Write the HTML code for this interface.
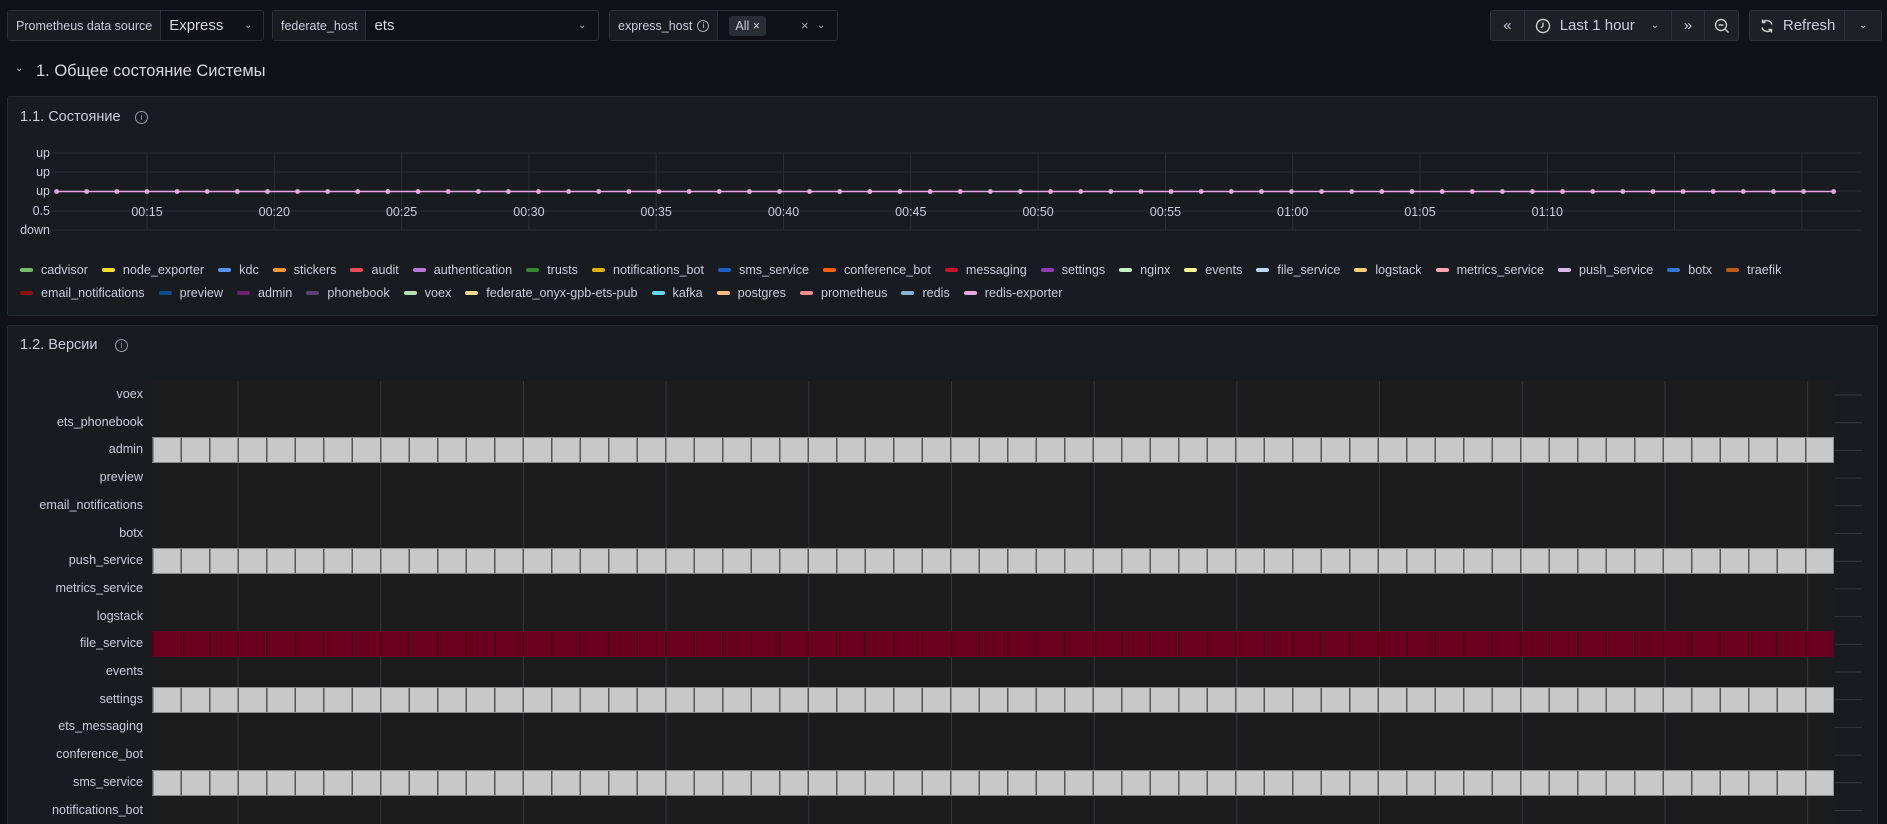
<!DOCTYPE html>
<html style="overflow:hidden;height:824px"><head><meta charset="utf-8">
<style>
*{box-sizing:border-box;margin:0;padding:0}
html,body{overflow:hidden}
body{width:1887px;height:824px;overflow:hidden;background:#111217;font-family:"Liberation Sans",sans-serif;color:#ccccdc;position:relative}
.abs{position:absolute}
.box{position:absolute;top:10px;height:31px;border:1px solid #2c3038;border-radius:3px;background:#111217;display:flex;align-items:center;font-size:13px}
.lab{height:100%;display:flex;align-items:center;padding:0 8px;background:#181b1f;border-right:1px solid #2c3038;color:#ccccdc;font-size:12.5px}
.val{padding:0 8px;font-size:15px;color:#d8d9e0}
.chev{position:absolute;font-size:10px;color:#aaa}
.panel{position:absolute;left:7px;right:9px;background:#181b1f;border:1px solid #25282e;border-radius:3px}
.ptitle{position:absolute;left:12px;font-size:14.5px;color:#ccccdc}
.info{display:inline-block;width:13px;height:13px;border:1.3px solid #9a9aa6;border-radius:50%;position:absolute;font-size:9px;text-align:center;line-height:10px;color:#9a9aa6}
.legend{position:absolute;left:12px;display:flex;font-size:12.6px;color:#ccccdc;white-space:nowrap}
.legend span{display:flex;align-items:center;margin-right:14px}
.legend i{display:inline-block;width:13px;height:4px;border-radius:2px;margin-right:8px}
.rl{position:absolute;right:1744px;font-size:12.6px;color:#ccccdc;text-align:right;white-space:nowrap}
.bar{position:absolute;left:152px;width:1682px;height:26px;border-top:1px solid #8a8a8a;border-bottom:1px solid #8a8a8a}
.tb{position:absolute;top:10px;height:31px;border:1px solid #2c3038;border-radius:3px;background:#1d2025;display:flex;align-items:center;color:#ccccdc;font-size:15px}
.tb div{height:100%;display:flex;align-items:center;justify-content:center;border-right:1px solid #2c3038}
.tb div:last-child{border-right:none}
</style></head><body>

<div class="box" style="left:7px;width:257px"><div class="lab">Prometheus data source</div><div class="val">Express</div><span class="chev" style="left:236px">&#8964;</span></div>
<div class="box" style="left:272px;width:327px"><div class="lab">federate_host</div><div class="val">ets</div><span class="chev" style="left:305px">&#8964;</span></div>
<div class="box" style="left:609px;width:229px"><div class="lab">express_host <span style="display:inline-block;width:12px;height:12px;border:1.2px solid #aaa;border-radius:50%;margin-left:5px;font-size:8px;text-align:center;line-height:9px">i</span></div>
<span style="margin-left:11px;background:#2a2d33;border-radius:3px;padding:3px 6px;font-size:12.5px">All &#215;</span><span style="position:absolute;left:191px;font-size:13px;color:#aaa">&#215;</span><span class="chev" style="left:207px">&#8964;</span></div>

<div class="tb" style="left:1490px;width:249px">
<div style="width:34px;font-size:15px">&#171;</div>
<div style="width:148px;justify-content:flex-start;padding-left:10px"><svg width="16" height="16" viewBox="0 0 16 16"><circle cx="8" cy="8" r="6.5" fill="none" stroke="#ccc" stroke-width="1.4"/><path d="M8 4.5V8l-2 2" fill="none" stroke="#ccc" stroke-width="1.4"/></svg><span style="margin-left:9px">Last 1 hour</span><span style="margin-left:16px;font-size:10px">&#8964;</span></div>
<div style="width:34px;font-size:15px">&#187;</div>
<div style="width:33px"><svg width="16" height="16" viewBox="0 0 16 16"><circle cx="7" cy="7" r="5.5" fill="none" stroke="#ccc" stroke-width="1.4"/><path d="M4.5 7h5M11 11l3.5 3.5" stroke="#ccc" stroke-width="1.4"/></svg></div>
</div>
<div class="tb" style="left:1749px;width:133px">
<div style="width:96px"><svg width="16" height="16" viewBox="0 0 16 16"><path d="M13 6.5A5.5 5.5 0 0 0 3.5 4.5M3 9.5a5.5 5.5 0 0 0 9.5 2M3.5 1.5v3h3M12.5 14.5v-3h-3" fill="none" stroke="#ccc" stroke-width="1.4"/></svg><span style="margin-left:8px">Refresh</span></div>
<div style="width:36px;font-size:10px">&#8964;</div>
</div>

<div class="abs" style="left:15px;top:63px;font-size:10px;color:#ccc">&#8964;</div>
<div class="abs" style="left:36px;top:62px;font-size:16.5px;color:#d8d9e0">1. Общее состояние Системы</div>

<div class="panel" style="top:96px;height:220px">
<div class="ptitle" style="top:12px">1.1. Состояние</div>
<span class="info" style="left:127px;top:14px">i</span>
<div class="legend" style="top:166px">
<span><i style="background:#73bf69"></i>cadvisor</span><span><i style="background:#fade2a"></i>node_exporter</span><span><i style="background:#5794f2"></i>kdc</span><span><i style="background:#ff9830"></i>stickers</span><span><i style="background:#f2495c"></i>audit</span><span><i style="background:#b877d9"></i>authentication</span><span><i style="background:#37872d"></i>trusts</span><span><i style="background:#e0b400"></i>notifications_bot</span><span><i style="background:#1f60c4"></i>sms_service</span><span><i style="background:#fa6400"></i>conference_bot</span><span><i style="background:#c4162a"></i>messaging</span><span><i style="background:#8f3bb8"></i>settings</span><span><i style="background:#c8f2c2"></i>nginx</span><span><i style="background:#fff899"></i>events</span><span><i style="background:#c0d8ff"></i>file_service</span><span><i style="background:#ffcb7d"></i>logstack</span><span><i style="background:#ffa6b0"></i>metrics_service</span><span><i style="background:#deb6f2"></i>push_service</span><span><i style="background:#3274d9"></i>botx</span><span><i style="background:#c15c17"></i>traefik</span>
</div>
<div class="legend" style="top:189px">
<span><i style="background:#8a0f10"></i>email_notifications</span><span><i style="background:#0b4b8a"></i>preview</span><span><i style="background:#6e2068"></i>admin</span><span><i style="background:#584477"></i>phonebook</span><span><i style="background:#b8deb0"></i>voex</span><span><i style="background:#f6d891"></i>federate_onyx-gpb-ets-pub</span><span><i style="background:#5fd9e8"></i>kafka</span><span><i style="background:#ffb87d"></i>postgres</span><span><i style="background:#f08c8c"></i>prometheus</span><span><i style="background:#82b5d8"></i>redis</span><span><i style="background:#e5a8e2"></i>redis-exporter</span>
</div>
</div>
<svg id="c1" class="abs" style="left:0;top:0" width="1887" height="320"></svg>

<div class="panel" style="top:325px;height:499px;border-bottom:none;border-radius:3px 3px 0 0">
<div class="ptitle" style="top:11px">1.2. Версии</div>
<span class="info" style="left:107px;top:13px">i</span>
</div>
<div class="abs" style="left:152px;top:381px;width:1682px;height:443px;background:#1c1c1d"></div>
<svg id="c2" class="abs" style="left:0;top:0" width="1887" height="824"></svg>
<div id="rows" class="abs" style="left:0;top:0;width:1887px;height:824px;overflow:hidden"></div>

<script>
var s1=document.getElementById('c1'),h='';
[153,172,191,211,230].forEach(function(y){h+='<line x1="52" x2="1862" y1="'+y+'" y2="'+y+'" stroke="#2a2d33"/>';});
var yl=['up','up','up','0.5','down'];[153,172,191,211,230].forEach(function(y,i){h+='<text x="50" y="'+(y+4)+'" text-anchor="end" font-size="12.5" fill="#ccccdc" font-family="Liberation Sans">'+yl[i]+'</text>';});
var xl=['00:15','00:20','00:25','00:30','00:35','00:40','00:45','00:50','00:55','01:00','01:05','01:10'];
for(var k=0;k<14;k++){var x=147+127.3*k;if(x>1860)break;h+='<line x1="'+x+'" x2="'+x+'" y1="153" y2="230" stroke="#2a2d33"/>';if(xl[k])h+='<text x="'+x+'" y="216" text-anchor="middle" font-size="12.5" fill="#ccccdc" font-family="Liberation Sans">'+xl[k]+'</text>';}
h+='<line x1="56" x2="1834" y1="191.5" y2="191.5" stroke="#e5a8e2" stroke-width="1.5"/>';
for(var k=0;k<60;k++){h+='<circle cx="'+(56.6+30.12*k)+'" cy="191.5" r="2.4" fill="#e5a8e2"/>';}
s1.innerHTML=h;
var s2=document.getElementById('c2'),g='';
for(var k=0;k<12;k++){var x=238+142.7*k;g+='<line x1="'+x+'" x2="'+x+'" y1="381" y2="824" stroke="#33363c"/>';}
var names=['voex','ets_phonebook','admin','preview','email_notifications','botx','push_service','metrics_service','logstack','file_service','events','settings','ets_messaging','conference_bot','sms_service','notifications_bot',''];
var bars={2:'#c8c8c8',6:'#c8c8c8',9:'#6a0020',11:'#c8c8c8',14:'#c8c8c8',16:'#c8c8c8'};
var r='';
names.forEach(function(n,i){var y=395+i*27.7;
 g+='<line x1="1835" x2="1862" y1="'+y+'" y2="'+y+'" stroke="#33363c"/>';
 if(n)r+='<div class="rl" style="top:'+(y-8)+'px">'+n+'</div>';
 if(bars[i]){var c=bars[i],lc=c=='#6a0020'?'#4a0016':'#555';
  r+='<div class="bar" style="top:'+(y-13)+'px;background:repeating-linear-gradient(90deg,'+lc+' 0 1.5px,'+c+' 1.5px 28.5px);border-color:'+(c=='#6a0020'?'#6a0020':'#8a8a8a')+'"></div>';}
});
s2.innerHTML=g;document.getElementById('rows').innerHTML=r;
</script>
</body></html>
